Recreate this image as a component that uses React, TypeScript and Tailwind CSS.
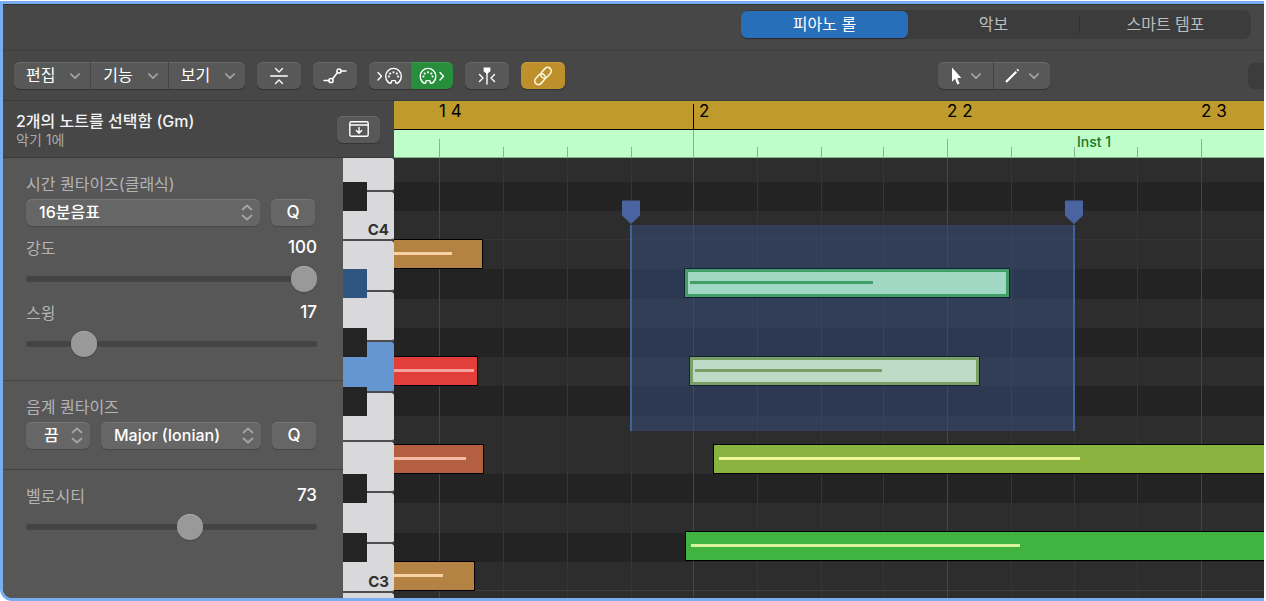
import { useState } from 'react';
import type { ReactNode } from 'react';

const toolButton =
  'flex h-[27px] items-center justify-center rounded-md bg-[#585858] text-white shadow-[0_1px_1px_#333333,inset_0_1px_0_#696969]';
const panelButton =
  'h-[27px] rounded-md bg-[#666666] text-white shadow-[0_1px_1px_#474747,inset_0_1px_0_#767676]';

function Chevron() {
  return (
    <svg width="12" height="8" viewBox="0 0 12 8" fill="none" stroke="#a6a6a6" strokeWidth="1.7" strokeLinecap="round" strokeLinejoin="round" aria-hidden="true">
      <path d="M1.8 2L6 6.200 10.200 2" />
    </svg>
  );
}

function MidiPort({ direction }: { direction: 'in' | 'out' }) {
  return (
    <svg width="28" height="18" viewBox="0 0 28 18" fill="none" stroke="currentColor" strokeWidth="1.4" strokeLinecap="round" strokeLinejoin="round" aria-hidden="true">
      <path d={direction === 'in' ? 'M2 5.500l3.500 3.700L2 13' : 'M22 5.500l3.500 3.700L22 13'} />
      <g transform={direction === 'in' ? 'translate(8.500 0)' : 'translate(1 0)'}>
        <path d="M6.800 15.800C5.500 17.500 1.200 14.500 1.200 9.200a7.800 7.800 0 0 1 15.600 0c0 5.300-4.300 8.300-5.600 6.600v-1.200a1 1 0 0 0-1-1H7.800a1 1 0 0 0-1 1z" />
        <g fill="currentColor" stroke="none">
          <circle cx="4.400" cy="9.500" r="1.100" />
          <circle cx="5.700" cy="6.600" r="1.100" />
          <circle cx="9" cy="5.300" r="1.100" />
          <circle cx="12.300" cy="6.600" r="1.100" />
          <circle cx="13.600" cy="9.500" r="1.100" />
        </g>
      </g>
    </svg>
  );
}

function Tabs() {
  const [active, setActive] = useState('피아노 롤');
  const tabs = [
    { name: '피아노 롤', width: 'w-[167px]' },
    { name: '악보', width: 'w-[171px]' },
    { name: '스마트 템포', width: 'w-[172px]' },
  ];

  return (
    <nav className="flex h-[47px] shrink-0 justify-end border-t border-b border-t-[#303030] border-b-[#3d3d3d] pt-[5px] pr-[13px]">
      <div role="tablist" className="flex h-[29px] items-center rounded-lg bg-[#3c3c3c] text-[16px]">
        {tabs.map((tab, i) => (
          <div key={tab.name} className={`flex items-center ${tab.width}`}>
            {i === 2 && <span className="h-[18px] w-px bg-[#323232]" />}
            <button
              role="tab"
              aria-selected={active === tab.name}
              onClick={() => setActive(tab.name)}
              className={`h-[27px] flex-1 rounded-md pb-0.5 leading-[22px] ${
                active === tab.name ? 'bg-[#286fba] text-white shadow-[0_1px_1px_#2c2c2c]' : 'text-[#bdbdbd]'
              }`}
            >
              {tab.name}
            </button>
          </div>
        ))}
      </div>
    </nav>
  );
}

function Toolbar() {
  return (
    <div className="flex h-[50px] shrink-0 items-center border-b border-[#3b3b3b] pl-[11px]">
      <div className={`${toolButton} w-[231px] text-[16px]`}>
        {['편집', '기능', '보기'].map((name, i) => (
          <button key={name} className={`flex h-full flex-1 items-center justify-between pr-[9px] pl-3 ${i > 0 ? 'border-l border-[#444444]' : ''}`}>
            <span className="pb-0.5 leading-[22px]">{name}</span>
            <Chevron />
          </button>
        ))}
      </div>

      <button aria-label="Collapse" className={`${toolButton} ml-3 w-11`}>
        <svg width="18" height="18" viewBox="0 0 18 18" fill="none" stroke="currentColor" strokeWidth="1.3" strokeLinecap="round" strokeLinejoin="round">
          <path d="M.7 9h16.600M5.500 1.500L9 5l3.500-3.500M5.500 16.500L9 13l3.500 3.500" />
        </svg>
      </button>
      <button aria-label="Automation" className={`${toolButton} ml-3 w-11`}>
        <svg width="24" height="18" viewBox="0 0 24 18" fill="none" stroke="currentColor" strokeWidth="1.500" strokeLinecap="round">
          <path d="M1 13.500h5M9.500 12l5-6.500M18 4h5" />
          <circle cx="8" cy="13.500" r="2.100" />
          <circle cx="16" cy="4" r="2.100" />
        </svg>
      </button>
      <div className="ml-3 flex">
        <button aria-label="MIDI in" className={`${toolButton} w-[42px] rounded-r-none`}>
          <MidiPort direction="in" />
        </button>
        <button aria-label="MIDI out" className="flex h-[27px] w-[42px] items-center justify-center rounded-r-md bg-[#278e3b] text-white shadow-[0_1px_1px_#333333,inset_0_1px_0_#3b9c4d]">
          <MidiPort direction="out" />
        </button>
      </div>
      <button aria-label="Catch playhead" className={`${toolButton} ml-3 w-11`}>
        <svg width="18" height="18" viewBox="0 0 18 18" fill="none" stroke="currentColor" strokeWidth="1.400" strokeLinecap="round" strokeLinejoin="round">
          <path d="M1.500 7.500L5 11l-3.500 3.500M16.500 7.500L13 11l3.500 3.500M9 5v12" />
          <path d="M5.600.5h6.800v3.700L9 7 5.600 4.200z" fill="currentColor" stroke="none" />
        </svg>
      </button>
      <button aria-label="Link" className="ml-3 flex h-[27px] w-11 items-center justify-center rounded-md bg-[#bd902c] text-[#fff5df] shadow-[0_1px_1px_#333333,inset_0_1px_0_#c99d3d]">
        <svg width="20" height="20" viewBox="0 0 20 20" fill="none" stroke="currentColor" strokeWidth="1.600">
          <rect x="7" y="3.200" width="12" height="7.200" rx="3.600" transform="rotate(-48 13 6.800)" />
          <rect x="1" y="9.600" width="12" height="7.200" rx="3.600" transform="rotate(-48 7 13.200)" />
        </svg>
      </button>

      <div className="ml-auto flex">
        <button aria-label="Pointer tool" className={`${toolButton} w-14 gap-2 rounded-r-none border-r border-[#444444]`}>
          <svg width="12" height="18" viewBox="0 0 12 18" fill="currentColor">
            <path d="M2 .5v14.200l3-2.900 2.300 5.700 2.300-1-2.400-5.500h4.200z" />
          </svg>
          <Chevron />
        </button>
        <button aria-label="Pencil tool" className={`${toolButton} w-14 gap-2 rounded-l-none`}>
          <svg width="16" height="16" viewBox="0 0 16 16" fill="none" stroke="currentColor">
            <path d="M2 14L12.300 3.700" strokeWidth="2.200" />
            <path d="M13.300 2.700l1-1" strokeWidth="2.400" />
          </svg>
          <Chevron />
        </button>
      </div>
      <div className="ml-[198px] h-[26px] w-4 rounded-l-md bg-[#3c3c3c]" />
    </div>
  );
}

function Select({ label, value, className }: { label: string; value: string; className: string }) {
  return (
    <span className="relative flex">
      <select aria-label={label} defaultValue={value} className={`${panelButton} appearance-none pb-0.5 text-[16px] leading-[22px] font-medium ${className}`}>
        <option>{value}</option>
      </select>
      <svg className="pointer-events-none absolute top-[5px] right-[7px]" width="12" height="17" viewBox="0 0 12 17" fill="none" stroke="#a6a6a6" strokeWidth="1.700" strokeLinecap="round" strokeLinejoin="round">
        <path d="M1.500 5.500L6 1.500l4.500 4M1.500 11.500l4.500 4 4.500-4" />
      </svg>
    </span>
  );
}

function Slider({ label, initial, thumb }: { label: string; initial: number; thumb?: number }) {
  const [value, setValue] = useState(thumb ?? initial);
  const shown = thumb !== undefined && value === thumb ? initial : value;

  return (
    <label className="block">
      <span className="flex h-6 items-center justify-between text-[16px]">
        <span className="text-[#b4b4b4]">{label}</span>
        <span className="text-[17px] font-medium text-white">{shown}</span>
      </span>
      <input
        type="range"
        value={value}
        onChange={(e) => setValue(Number(e.target.value))}
        className="mt-1 block h-[30px] w-full appearance-none bg-transparent [&::-webkit-slider-runnable-track]:h-[6px] [&::-webkit-slider-runnable-track]:rounded-full [&::-webkit-slider-runnable-track]:bg-[#444444] [&::-webkit-slider-thumb]:-mt-[10px] [&::-webkit-slider-thumb]:size-[26px] [&::-webkit-slider-thumb]:appearance-none [&::-webkit-slider-thumb]:rounded-full [&::-webkit-slider-thumb]:bg-[#999999] [&::-webkit-slider-thumb]:shadow-[0_1px_1px_#474747,inset_0_1px_0_#a8a8a8]"
      />
    </label>
  );
}

function Section({ title, children }: { title: string; children: ReactNode }) {
  return (
    <>
      <h2 className="h-6 text-[16px] leading-6 text-[#b4b4b4]">{title}</h2>
      <div className="mt-[3px] flex gap-[11px]">{children}</div>
    </>
  );
}

function SelectionHeader() {
  return (
    <header className="flex h-[57px] shrink-0 items-center justify-between border-b border-[#3a3a3a] bg-[#474747] pr-[14px] pl-[13px]">
      <div className="pt-0.5">
        <h1 className="text-[16px] leading-5 font-medium text-[#f4f4f4]">2개의 노트를 선택함 (Gm)</h1>
        <p className="text-[14px] leading-[18px] text-[#ababab]">악기 1에</p>
      </div>
      <button aria-label="Show region" className={`${toolButton} w-[43px]`}>
        <svg width="20" height="16" viewBox="0 0 20 16" fill="none" stroke="currentColor" strokeWidth="1.400" strokeLinecap="round" strokeLinejoin="round">
          <rect x=".8" y=".8" width="18.400" height="14.400" rx="1.500" />
          <path d="M1 4h18M10 6.500V12M7.300 9.500L10 12.200l2.700-2.700" />
        </svg>
      </button>
    </header>
  );
}

function Inspector() {
  return (
    <aside className="w-[340px] shrink-0 bg-[#575757]">
      <section className="h-[223px] border-b border-[#434343] pt-[14px] pr-[26px] pl-[23px]">
        <Section title="시간 퀀타이즈(클래식)">
          <Select label="시간 퀀타이즈" value="16분음표" className="w-[234px] pl-[13px]" />
          <button className={`${panelButton} w-[44px] text-[17px] font-medium`}>Q</button>
        </Section>
        <div className="mt-[10px] space-y-[7px]">
          <Slider label="강도" initial={100} />
          <Slider label="스윙" initial={17} />
        </div>
      </section>

      <section className="h-[89px] border-b border-[#434343] pt-[14px] pl-[23px]">
        <Section title="음계 퀀타이즈">
          <Select label="음계 퀀타이즈" value="끔" className="w-[64px] pl-[18px]" />
          <Select label="음계" value="Major (Ionian)" className="w-[160px] pl-[13px]" />
          <button className={`${panelButton} w-[44px] text-[17px] font-medium`}>Q</button>
        </Section>
      </section>

      <section className="pt-[14px] pr-[26px] pl-[23px]">
        <Slider label="벨로시티" initial={73} thumb={57} />
      </section>
    </aside>
  );
}

const whiteKeys = [
  { height: 'h-[34px]' },
  { height: 'h-[49px]', label: 'C4' },
  { height: 'h-[51px]' },
  { height: 'h-[50px]' },
  { height: 'h-[51px]', active: true },
  { height: 'h-[49px]' },
  { height: 'h-[51px]' },
  { height: 'h-[51px]' },
  { height: 'h-[49px]', label: 'C3' },
  { height: 'h-[20px]' },
];

const blackKeys = [
  { top: 24 },
  { top: 111, active: true },
  { top: 170 },
  { top: 229 },
  { top: 316 },
  { top: 375 },
];

function Keyboard() {
  return (
    <div className="relative min-w-0 flex-1 overflow-hidden bg-[#333333]">
      {whiteKeys.map((key, i) => (
        <div
          key={i}
          className={`flex items-end justify-end rounded-r-[3px] border-b-2 border-[#4d4d4f] pr-[5px] text-[15px] leading-[18px] font-bold text-[#303030] ${key.height} ${
            key.active ? 'bg-[#6696cf]' : 'bg-[#d9d9db]'
          }`}
        >
          {key.label}
        </div>
      ))}
      {blackKeys.map((key) => (
        <div
          key={key.top}
          className={`absolute left-0 h-[29px] w-6 ${key.active ? 'bg-[#2f5480]' : 'bg-[#242424]'}`}
          style={{ top: key.top }}
        />
      ))}
    </div>
  );
}

// x offsets from the left edge of the timeline, one per sixteenth division
const divisions = [45, 109, 173, 237, 299, 363, 427, 489, 553, 617, 680, 743, 807];

function Ruler() {
  return (
    <div className="relative shrink-0 overflow-hidden">
      <div className="h-[29px] border-b border-black bg-[#bf9b2d]" />
      <div className="h-7 border-b border-[#83b38b] bg-[#bffdca]" />
      {divisions.map((x, i) => (
        <span
          key={x}
          className={`absolute bottom-px w-px bg-[#87b48e] ${i === 4 ? 'h-7' : i % 4 === 0 ? 'h-[18px]' : 'h-[10px]'}`}
          style={{ left: x }}
        />
      ))}
      <span className="absolute top-[3px] left-[299px] h-[26px] w-px bg-black" />
      <span className="absolute top-0 left-[45px] text-[17px] leading-[21px] text-black">1 4</span>
      <span className="absolute top-0 left-[305px] text-[17px] leading-[21px] text-black">2</span>
      <span className="absolute top-0 left-[553px] text-[17px] leading-[21px] text-black">2 2</span>
      <span className="absolute top-0 left-[807px] text-[17px] leading-[21px] text-black">2 3</span>
      <span className="absolute top-[32px] left-[683px] text-[14px] leading-[18px] font-medium text-[#177527]">Inst 1</span>
    </div>
  );
}

// One octave from B down to C; true marks the rows of the black keys
const octave = [false, true, false, true, false, true, false, false, true, false, true, false];

const notes = [
  { x: -2, y: 81, width: 91, line: 59, fill: 'bg-[#b48243]', stroke: 'bg-[#f7d3a3]' },
  { x: -2, y: 198, width: 86, line: 81, fill: 'bg-[#e23f3a]', stroke: 'bg-[#f7a19e]' },
  { x: -2, y: 286, width: 92, line: 73, fill: 'bg-[#b45f40]', stroke: 'bg-[#f5bba4]' },
  { x: -2, y: 403, width: 83, line: 50, fill: 'bg-[#b48243]', stroke: 'bg-[#f7d3a3]' },
  { x: 319, y: 286, width: 560, line: 361, fill: 'bg-[#8ab33f]', stroke: 'bg-[#eef59b]' },
  { x: 291, y: 373, width: 590, line: 329, fill: 'bg-[#41b341]', stroke: 'bg-[#d8f59b]' },
];

const selectedNotes = [
  { x: 291, y: 111, width: 324, line: 183, fill: 'border-[#409f66] bg-[#a0d8c3]', stroke: 'bg-[#409f66]' },
  { x: 296, y: 199, width: 289, line: 187, fill: 'border-[#789f66] bg-[#bddac6]', stroke: 'bg-[#789f66]' },
];

function LocatorPin({ x }: { x: number }) {
  return (
    <svg className="absolute top-[42px]" style={{ left: x }} width="18" height="25" viewBox="0 0 18 25" aria-hidden="true">
      <path d="M1 .5h16a1 1 0 0 1 1 1v14L9 24 0 15.500v-14a1 1 0 0 1 1-1z" fill="#4964a0" />
    </svg>
  );
}

function PianoRoll() {
  return (
    <div className="relative flex-1 overflow-hidden bg-[#2d2d2d]">
      <div className="h-6" />
      <div className="h-[29px] bg-[#232323]" />
      <div className="h-[29px] border-b border-[#353535]" />
      <div className="grid h-[351px] grid-rows-12">
        {octave.map((dark, i) => (
          <div key={i} className={dark ? 'bg-[#232323]' : i === 11 ? 'border-b border-[#404040]' : ''} />
        ))}
      </div>

      {divisions.map((x, i) => (
        <span
          key={x}
          className={`absolute inset-y-0 w-px ${i % 4 === 0 ? 'bg-[#454545]' : 'bg-[#363636]'}`}
          style={{ left: x }}
        />
      ))}

      <div className="absolute top-[67px] left-[236px] h-[206px] w-[445px] border-x-2 border-[#3f639f] bg-[#355080]/50" />
      <LocatorPin x={228} />
      <LocatorPin x={671} />

      {notes.map((note) => (
        <div
          key={`${note.x}-${note.y}`}
          className={`absolute h-[30px] border border-black ${note.fill}`}
          style={{ left: note.x, top: note.y, width: note.width }}
        >
          <span className={`absolute top-[12px] h-[3px] ${note.x > 0 ? 'left-[5px]' : 'left-0'} ${note.stroke}`} style={{ width: note.line }} />
        </div>
      ))}
      {selectedNotes.map((note) => (
        <div
          key={note.y}
          className={`absolute h-[28px] border-[3px] outline outline-[#152238] ${note.fill}`}
          style={{ left: note.x, top: note.y, width: note.width }}
        >
          <span className={`absolute top-[9px] left-[2px] h-[3px] ${note.stroke}`} style={{ width: note.line }} />
        </div>
      ))}
    </div>
  );
}

export default function App() {
  return (
    <div className="h-screen overflow-hidden bg-white pt-px pr-[2px] font-['Inter','Noto_Sans_CJK_KR',sans-serif]">
      <main className="flex h-[calc(100vh-1px)] flex-col overflow-hidden rounded-bl-xl border-y-3 border-l-3 border-[#76aff0] bg-[#474747]">
        <Tabs />
        <Toolbar />
        <div className="flex min-h-0 flex-1">
          <div className="flex w-[391px] shrink-0 flex-col">
            <SelectionHeader />
            <div className="flex min-h-0 flex-1">
              <Inspector />
              <Keyboard />
            </div>
          </div>
          <div className="flex min-w-0 flex-1 flex-col">
            <Ruler />
            <PianoRoll />
          </div>
        </div>
      </main>
    </div>
  );
}
